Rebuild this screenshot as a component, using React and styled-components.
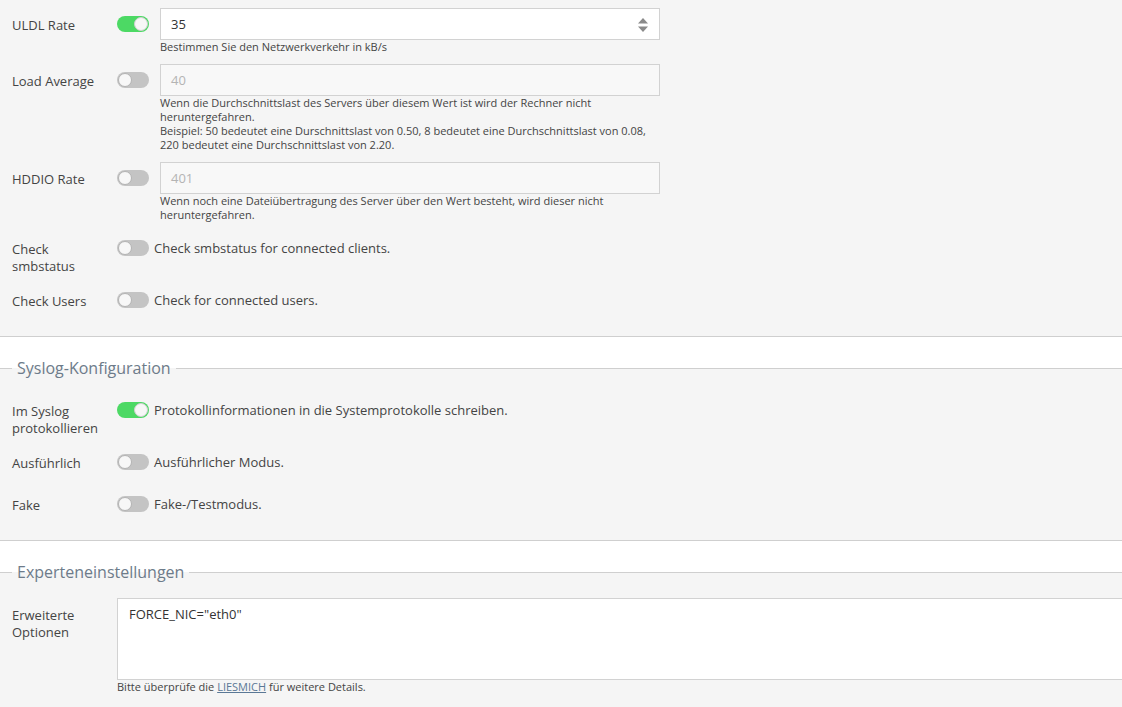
import React from 'react'
import styled, { createGlobalStyle } from 'styled-components'

const GlobalStyle = createGlobalStyle`
  html, body {
    margin: 0;
    padding: 0;
    background: #ffffff;
    overflow: hidden;
  }
  body {
    font-family: "Open Sans", "Liberation Sans", sans-serif;
    color: #444;
  }
`

const Page = styled.div`
  width: 1122px;
  overflow: hidden;
`

const Section = styled.fieldset`
  margin: ${props => props.first ? '0' : '20px 0 0'};
  padding: ${props => props.top}px 12px ${props => props.bottom}px;
  border: none;
  border-top: ${props => props.first ? 'none' : '1px solid #cfcfcf'};
  border-bottom: 1px solid #cfcfcf;
  background: #f5f5f5;
  min-width: 0;
`

const Legend = styled.legend`
  padding: 0 5px;
  font-size: 16px;
  line-height: 22px;
  color: #6d7b8a;
`

const Row = styled.div`
  display: flex;
  align-items: flex-start;
  margin-bottom: 10px;
`

const Label = styled.div`
  width: 105px;
  box-sizing: border-box;
  padding: 9px 10px 0 0;
  margin-bottom: -1px;
  flex-shrink: 0;
  font-size: 13px;
  line-height: 17px;
  color: #444;
`

const Control = styled.div`
  display: flex;
  flex-direction: column;
`

const ControlLine = styled.div`
  display: flex;
  align-items: center;
  min-height: 32px;
`

const Toggle = styled.span`
  position: relative;
  display: inline-block;
  width: 32px;
  height: 16px;
  border-radius: 8px;
  margin-right: ${props => props.gap}px;
  flex-shrink: 0;
  background: ${props => props.on ? '#4cd964' : '#c4c4c4'};

  &::after {
    content: '';
    position: absolute;
    top: 1px;
    left: ${props => props.on ? '17px' : '1px'};
    width: 12px;
    height: 12px;
    border-radius: 50%;
    background: #f7f7f7;
    border: 1px solid ${props => props.on ? '#cfcfcf' : '#b3b3b3'};
  }
`

const InputWrap = styled.div`
  position: relative;
  width: 500px;
  height: 32px;
  box-sizing: border-box;
  border: 1px solid #d2d2d2;
  background: ${props => props.disabled ? '#f8f8f8' : '#ffffff'};
  display: flex;
  align-items: center;
  padding: 0 10px;
  font-size: 13px;
  color: ${props => props.disabled ? '#b4b4b4' : '#333'};
`

const Spinner = styled.svg`
  position: absolute;
  right: 10px;
  top: 8px;
`

const SwitchText = styled.span`
  padding-top: 1px;
  font-size: 13px;
  line-height: 17px;
  color: #444;
`

const Help = styled.div`
  width: 500px;
  margin-left: ${props => props.indent}px;
  font-size: 11px;
  line-height: 14px;
  color: #444;
`

const TextArea = styled.div`
  width: 1040px;
  height: 82px;
  box-sizing: border-box;
  border: 1px solid #d2d2d2;
  background: #ffffff;
  padding: 7px 11px;
  font-size: 13px;
  line-height: 17px;
  color: #333;
`

const HelpLink = styled.a`
  color: #5a7896;
  text-decoration: underline;
`

const NumberField = ({ on, value, help }) => (
  <Row>
    <Label>{help.label}</Label>
    <Control>
      <ControlLine>
        <Toggle on={on} gap={11} />
        <InputWrap disabled={!on}>
          {value}
          {on && (
            <Spinner width="12" height="16" viewBox="0 0 12 16">
              <path d="M6 1 L11 6.5 L1 6.5 Z" fill="#8a8a8a" />
              <path d="M1 9.5 L11 9.5 L6 15 Z" fill="#8a8a8a" />
            </Spinner>
          )}
        </InputWrap>
      </ControlLine>
      <Help indent={43}>{help.text}</Help>
    </Control>
  </Row>
)

const SwitchField = ({ label, on, text }) => (
  <Row>
    <Label>{label}</Label>
    <ControlLine>
      <Toggle on={on} gap={5} />
      <SwitchText>{text}</SwitchText>
    </ControlLine>
  </Row>
)

const App = () => {
  return (
    <>
      <GlobalStyle />
      <Page>
        <Section first top={8} bottom={10}>
          <NumberField
            on
            value="35"
            help={{ label: 'ULDL Rate', text: 'Bestimmen Sie den Netzwerkverkehr in kB/s' }}
          />
          <NumberField
            value="40"
            help={{
              label: 'Load Average',
              text: (
                <>
                  Wenn die Durchschnittslast des Servers über diesem Wert ist wird der Rechner nicht heruntergefahren.
                  <br />
                  Beispiel: 50 bedeutet eine Durschnittslast von 0.50, 8 bedeutet eine Durchschnittslast von 0.08, 220 bedeutet eine Durchschnittslast von 2.20.
                </>
              ),
            }}
          />
          <NumberField
            value="401"
            help={{
              label: 'HDDIO Rate',
              text: 'Wenn noch eine Dateiübertragung des Server über den Wert besteht, wird dieser nicht heruntergefahren.',
            }}
          />
          <SwitchField label="Check smbstatus" text="Check smbstatus for connected clients." />
          <SwitchField label="Check Users" text="Check for connected users." />
        </Section>

        <Section top={15} bottom={10}>
          <Legend>Syslog-Konfiguration</Legend>
          <SwitchField
            label="Im Syslog protokollieren"
            on
            text="Protokollinformationen in die Systemprotokolle schreiben."
          />
          <SwitchField label="Ausführlich" text="Ausführlicher Modus." />
          <SwitchField label="Fake" text="Fake-/Testmodus." />
        </Section>

        <Section top={15} bottom={10}>
          <Legend>Experteneinstellungen</Legend>
          <Row>
            <Label>Erweiterte Optionen</Label>
            <Control>
              <TextArea>FORCE_NIC="eth0"</TextArea>
              <Help indent={0}>
                Bitte überprüfe die <HelpLink href="#">LIESMICH</HelpLink> für weitere Details.
              </Help>
            </Control>
          </Row>
        </Section>
      </Page>
    </>
  )
}

export default App
